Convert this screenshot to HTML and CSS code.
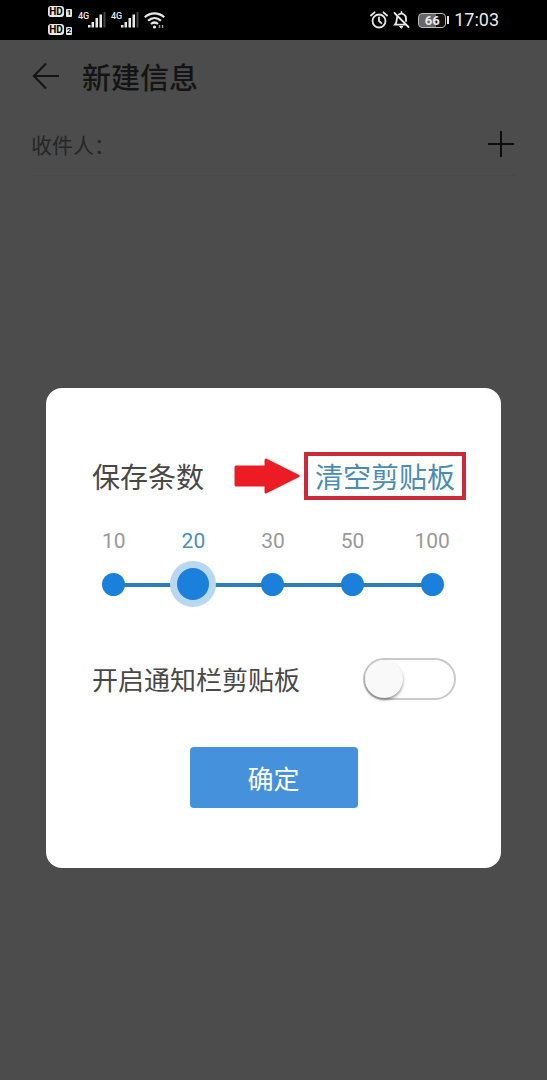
FILE: index.html
```html
<!DOCTYPE html>
<html lang="zh-CN">
<head>
    <meta charset="UTF-8">
    <meta name="viewport" content="width=device-width, initial-scale=1.0">
    <title>新建信息</title>
    <link rel="stylesheet" href="styles.css">
</head>
<body>
    <div class="status-bar">
        <div class="status-group">
            <div class="hd">
                <div class="hd-row"><span class="hd-tag">HD</span><span class="hd-sim">1</span></div>
                <div class="hd-row"><span class="hd-tag">HD</span><span class="hd-sim">2</span></div>
            </div>
            <div class="signal">
                <span class="signal-type">4G</span>
                <svg width="18" height="18" viewBox="0 0 18 18" fill="#e8e8e8">
                    <rect x="0" y="14" width="2.500" height="2.500"/>
                    <rect x="3.500" y="11" width="2.500" height="5.500"/>
                    <rect x="7.500" y="7" width="2.500" height="9.500"/>
                    <rect x="11.500" y="3.500" width="2.500" height="13"/>
                    <rect x="15.500" y="1" width="2" height="15.500" fill="#444"/>
                </svg>
            </div>
            <div class="signal">
                <span class="signal-type">4G</span>
                <svg width="18" height="18" viewBox="0 0 18 18" fill="#e8e8e8">
                    <rect x="0" y="14" width="2.500" height="2.500"/>
                    <rect x="3.500" y="11" width="2.500" height="5.500"/>
                    <rect x="7.500" y="7" width="2.500" height="9.500"/>
                    <rect x="11.500" y="3.500" width="2.500" height="13"/>
                    <rect x="15.500" y="1" width="2" height="15.500" fill="#444"/>
                </svg>
            </div>
            <svg width="21" height="18" viewBox="0 0 21 18" fill="none" stroke="#e8e8e8" stroke-width="2.200">
                <path d="M.8 6.200C6.500 1 14.500 1 20.200 6.200"/>
                <path d="M4 9.800c4-3.600 9-3.600 13 0"/>
                <path d="M7 13c2.200-1.900 4.800-1.900 7 0"/>
                <circle cx="10.500" cy="16" r="1.600" fill="#e8e8e8" stroke="none"/>
                <path d="M15.500 14v3M18.500 14v3" stroke="#999" stroke-width="1.500"/>
            </svg>
        </div>
        <div class="status-group status-right">
            <svg width="18" height="18" viewBox="0 0 18 18" fill="none" stroke="#e8e8e8" stroke-width="1.800" stroke-linecap="round">
                <circle cx="9" cy="10" r="6.500"/>
                <path d="M9 6.500V10l2.300 2.200M1 4.500L4.500 1.300M17 4.500l-3.500-3.200"/>
            </svg>
            <svg width="17" height="18" viewBox="0 0 17 18" fill="none" stroke="#e8e8e8" stroke-width="1.800" stroke-linecap="round">
                <path d="M6 3.400C9 1.500 13 3.600 13 7.500V10M4.200 5.500C3.500 8 4.400 11 2 13.700h10.500M8.500 1v1M1.500 2L15.500 16"/>
                <path d="M7 15.500h3L8.500 17z" fill="#e8e8e8" stroke-width="1"/>
            </svg>
            <span class="battery"><span class="battery-level">66</span></span>
            <span class="clock">17:03</span>
        </div>
    </div>

    <main class="page">
        <header class="title-bar">
            <button class="icon-btn" aria-label="返回">
                <svg width="28" height="28" viewBox="0 0 28 28" fill="none" stroke="#141414" stroke-width="2">
                    <path d="M27 14H2M14 1.500L1.800 14 14 26.500"/>
                </svg>
            </button>
            <h1>新建信息</h1>
        </header>
        <div class="recipient">
            <label for="recipient">收件人：</label>
            <input type="text" id="recipient">
            <button class="icon-btn" aria-label="添加收件人">
                <svg width="28" height="28" viewBox="0 0 28 28" stroke="#0c0c0c" stroke-width="2">
                    <path d="M14 1v26M1 14h26"/>
                </svg>
            </button>
        </div>
    </main>

    <div class="overlay">
        <div class="dialog" role="dialog" aria-label="剪贴板设置">
            <div class="row">
                <span class="row-title" id="countLabel">保存条数</span>
                <svg class="arrow" width="66" height="36" viewBox="0 0 66 36">
                    <path d="M2 9H32V2L64 18 32 34V27H2z" fill="#ed1c24" stroke="#ed1c24" stroke-width="3" stroke-linejoin="round"/>
                </svg>
                <button class="clear-btn">清空剪贴板</button>
            </div>

            <div class="steps" role="radiogroup" aria-labelledby="countLabel">
                <label class="step">10<input type="radio" name="count" value="10"></label>
                <label class="step">20<input type="radio" name="count" value="20" checked></label>
                <label class="step">30<input type="radio" name="count" value="30"></label>
                <label class="step">50<input type="radio" name="count" value="50"></label>
                <label class="step">100<input type="radio" name="count" value="100"></label>
            </div>

            <div class="row switch-row">
                <label for="notify">开启通知栏剪贴板</label>
                <input type="checkbox" class="switch" id="notify">
            </div>

            <button class="ok-btn">确定</button>
        </div>
    </div>
</body>
</html>
```
FILE: styles.css
```css
* {
    box-sizing: border-box;
}
body {
    font-family: "Noto Sans CJK SC", sans-serif;
    background-color: #4c4c4c;
    margin: 0;
    min-height: 100vh;
    position: relative;
}
button {
    font-family: inherit;
    border: none;
    padding: 0;
    background: none;
    cursor: pointer;
}
svg {
    display: block;
    flex-shrink: 0;
}

/* Status bar */
.status-bar {
    display: flex;
    justify-content: space-between;
    align-items: center;
    height: 40px;
    padding: 0 48px;
    background-color: #000;
    color: #e8e8e8;
    font-family: Roboto, sans-serif;
}
.status-group {
    display: flex;
    align-items: center;
    gap: 5px;
}
.hd {
    display: flex;
    flex-direction: column;
    gap: 7px;
    margin-right: 1px;
}
.hd-row {
    display: flex;
    align-items: flex-end;
    gap: 2px;
}
.hd-tag {
    width: 16px;
    border-radius: 3px;
    background-color: #e8e8e8;
    color: #000;
    font-size: 10px;
    font-weight: 700;
    line-height: 11px;
    text-align: center;
}
.hd-sim {
    width: 6px;
    border-radius: 1px;
    background-color: #e8e8e8;
    color: #000;
    font-size: 8px;
    font-weight: 700;
    line-height: 8px;
    text-align: center;
}
.signal {
    display: flex;
    align-items: flex-start;
}
.signal-type {
    width: 10px;
    font-size: 9px;
    font-weight: 500;
    line-height: 10px;
}
.status-right {
    gap: 5px;
}
.battery {
    display: flex;
    align-items: center;
    margin-left: 3px;
}
.battery::after {
    content: "";
    width: 2px;
    height: 8px;
    margin-left: 1px;
    background-color: #e8e8e8;
}
.battery-level {
    width: 28px;
    border: 1px solid #bbb;
    border-radius: 4px;
    background: linear-gradient(to right, #666 66%, #111 66%);
    font-size: 13px;
    font-weight: 700;
    line-height: 13px;
    text-align: center;
}
.clock {
    font-size: 18px;
    line-height: 20px;
}

/* Message page */
.title-bar {
    display: flex;
    align-items: center;
    gap: 22px;
    height: 72px;
    padding: 0 32px;
}
h1 {
    margin: 0;
    color: #141414;
    font-size: 29px;
    font-weight: 500;
    line-height: 40px;
}
.recipient {
    display: flex;
    align-items: center;
    height: 64px;
    margin: 0 32px 0 31px;
    border-bottom: 1px solid #484848;
}
.recipient label {
    color: #262626;
    font-size: 21px;
    line-height: 30px;
}
.recipient input {
    flex: 1;
    min-width: 0;
    border: none;
    outline: none;
    background: none;
    color: #141414;
    font: inherit;
}

/* Clipboard dialog */
.overlay {
    position: absolute;
    inset: 40px 0 0;
    padding: 348px 46px 40px;
}
.dialog {
    display: flex;
    flex-direction: column;
    padding: 64px 35px 60px 46px;
    border-radius: 16px;
    background-color: #fff;
}
.row {
    display: flex;
    align-items: center;
    color: #484848;
}
.row-title {
    font-size: 28px;
    line-height: 48px;
}
.arrow {
    margin-left: auto;
}
.clear-btn {
    margin-left: 4px;
    padding: 0 7px;
    border: 4px solid #cb2b38;
    color: #4b8db2;
    font-size: 28px;
    line-height: 40px;
}
.steps {
    display: flex;
    position: relative;
    margin: 26px -6px 0 -18px;
    font-family: Roboto, sans-serif;
}
/* Track behind the dots */
.steps::before {
    content: "";
    position: absolute;
    left: 10%;
    right: 10%;
    bottom: 21px;
    height: 4px;
    background-color: #2d7dbd;
}
.step {
    display: flex;
    flex: 1;
    flex-direction: column;
    align-items: center;
    color: #999;
    font-size: 21px;
    line-height: 30px;
    cursor: pointer;
}
.step input {
    appearance: none;
    position: relative;
    width: 23px;
    height: 23px;
    margin: 17px 0 12px;
    border-radius: 50%;
    background-color: #1b80dc;
}
.step:has(input:checked) {
    color: #4b90b8;
}
.step input:checked {
    width: 46px;
    height: 46px;
    margin: 5px 0 0;
    border: 7px solid #b9d7ee;
}
.switch-row {
    margin-top: 50px;
    padding-right: 10px;
    justify-content: space-between;
    font-size: 26px;
    line-height: 42px;
}
.switch {
    appearance: none;
    width: 93px;
    height: 42px;
    margin: 0;
    border: 2px solid #c9c9c9;
    border-radius: 21px;
    background-color: #fff;
    cursor: pointer;
}
.switch::before {
    content: "";
    display: block;
    width: 38px;
    height: 38px;
    border-radius: 50%;
    background-color: #f9f9f9;
    box-shadow: 0 2px 3px rgba(0, 0, 0, 0.4);
}
.switch:checked {
    background-color: #4691dc;
}
.switch:checked::before {
    margin-left: auto;
}
.ok-btn {
    align-self: center;
    width: 168px;
    margin: 47px 11px 0 0;
    border-radius: 4px;
    background-color: #4691dc;
    color: #fff;
    font-size: 26px;
    line-height: 61px;
}
```
